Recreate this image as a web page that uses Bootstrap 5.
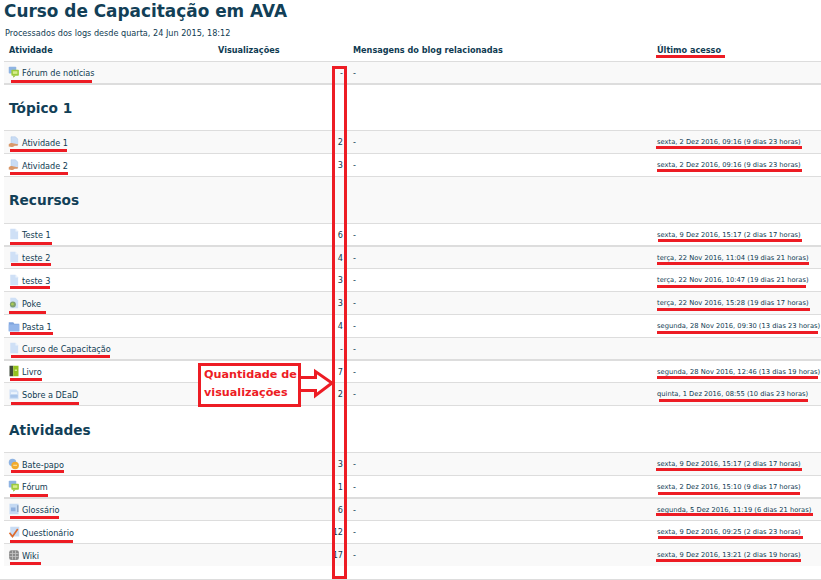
<!DOCTYPE html>
<html lang="pt-BR">
<head>
<meta charset="utf-8">
<title>Curso de Capacitação em AVA</title>
<link href="https://cdn.jsdelivr.net/npm/bootstrap@5.3.0/dist/css/bootstrap.min.css" rel="stylesheet">
<style>
html,body{margin:0;height:580px;overflow:hidden;background:#fff}
body{font-family:"DejaVu Sans",sans-serif;font-size:8.15px;color:#0f3b52;line-height:1}
.pagina{position:relative;width:821px;height:580px;padding:0 0 0 4px;border-bottom:0}
.titulo{font-family:"DejaVu Sans",sans-serif;font-weight:700;font-size:16.9px;line-height:20px;color:#123f57;margin:0;padding-top:1px;height:28px;white-space:nowrap}
.processados{height:17px;line-height:11px;margin:0 0 0 1px;font-size:8.15px}
.relatorio{table-layout:fixed;width:817px;border-collapse:separate;border-spacing:0;margin:0;color:#0f3b52}
.relatorio th,.relatorio td{padding:0 5px;border:0;border-bottom:1px solid #ddd;background:transparent;color:#0f3b52;font-size:8.15px;vertical-align:middle;white-space:nowrap;box-shadow:none}
.relatorio td{padding-top:1px}
.relatorio th{font-weight:700;height:17px;padding-bottom:5px}
.relatorio td.forte{border-bottom-width:2px;border-bottom-color:#ddd}
.relatorio td.fim{border-bottom:0}
.relatorio td.data{font-size:6.72px;padding-top:1px}
.relatorio td.desce{padding-top:3px}
.relatorio tr.cinza>td{background:#f9f9f9}
.relatorio tr.h22>td{height:22px}
.relatorio tr.h23>td{height:23px}
.relatorio tr.h46>td{height:46px}
.relatorio tr.h47>td{height:47px}
.relatorio .secao{font-weight:700;font-size:13.7px;color:#123f57}
.relatorio .num{text-align:right}
.ico{width:12px;height:12px;vertical-align:middle;margin:-2px 2px 0 -1px}
.rodape{position:absolute;left:0;right:0;top:579px;height:1px;background:#ddd}
.marcas{position:absolute;left:0;top:0;width:821px;height:580px;pointer-events:none}
.legenda{position:absolute;left:198px;top:363px;width:103px;height:44px;border:3px solid #ed1c24;background:#fff;color:#ed1c24;font-family:"DejaVu Sans",sans-serif;font-weight:700;font-size:11.2px;line-height:18px;padding:0 0 0 3px;white-space:nowrap}
</style>
</head>
<body>
<svg width="0" height="0" class="d-block position-absolute">
<defs>
<symbol id="i-forum" viewBox="0 0 16 16"><rect x="1" y="1" width="10" height="9" rx="1" fill="#8fb4e3"/><rect x="4.5" y="5" width="10" height="8" rx="1" fill="#9ccb3b"/><rect x="6.5" y="7" width="6" height="3.5" fill="#d7ec8c"/><path d="M7 13h3l-3 2.5z" fill="#8ab52d"/></symbol>
<symbol id="i-assign" viewBox="0 0 16 16"><path d="M4 1h6l3 3v8H4z" fill="#c9dcf4" stroke="#a8c4e6" stroke-width=".6"/><path d="M1 11c2-2 5-2 7-1l5 1c1 .5 0 2-1 2H9c-2 2-5 2-8 1z" fill="#d9986a"/></symbol>
<symbol id="i-page" viewBox="0 0 16 16"><path d="M3 1h7l3.500 3.500V15H3z" fill="#cfe0f6"/><path d="M10 1l3.500 3.500H10z" fill="#eef4fc"/></symbol>
<symbol id="i-poke" viewBox="0 0 16 16"><path d="M3 1h7l3.500 3.500V15H3z" fill="#cfe0f6"/><circle cx="6.500" cy="10" r="4" fill="#7f9e6e"/><circle cx="6" cy="9.500" r="1.700" fill="#a9cc55"/></symbol>
<symbol id="i-pasta" viewBox="0 0 16 16"><path d="M1 3h6l1.500 2H15v10H1z" fill="#7fa5de"/><rect x="1" y="6" width="14" height="9" fill="#94b6ea"/></symbol>
<symbol id="i-livro" viewBox="0 0 16 16"><rect x="2" y="1" width="5" height="14" fill="#3f4a3a"/><rect x="7" y="1" width="7" height="14" fill="#94c11f"/><rect x="9" y="6" width="3" height="2" fill="#d5e88b"/></symbol>
<symbol id="i-sobre" viewBox="0 0 16 16"><path d="M2 2h9l3 3v10H2z" fill="#cfe0f6"/><rect x="4" y="6" width="8" height="1.500" fill="#fff"/><rect x="3" y="9" width="10" height="4" fill="#a9c5ea"/></symbol>
<symbol id="i-chat" viewBox="0 0 16 16"><circle cx="6" cy="6" r="5" fill="#8fb4e3"/><circle cx="9.500" cy="10" r="5" fill="#f2ab2d"/><rect x="7" y="9" width="5" height="1.500" fill="#fbe3a4"/></symbol>
<symbol id="i-glossario" viewBox="0 0 16 16"><rect x="2" y="1" width="12" height="14" fill="#c4d9f3"/><rect x="4" y="6" width="6" height="5" fill="#8fb0de"/><rect x="12" y="3" width="2" height="9" fill="#93a9c7"/></symbol>
<symbol id="i-quiz" viewBox="0 0 16 16"><rect x="3" y="1" width="12" height="13" fill="#c9dcf4"/><path d="M2 9l4 5 7-10" fill="none" stroke="#de6b2c" stroke-width="2.200"/></symbol>
<symbol id="i-wiki" viewBox="0 0 16 16"><rect x="1.500" y="1.500" width="13" height="13" rx="3" fill="#8a8a8a"/><path d="M2 6h12M2 10h12M6 2v12M10 2v12" stroke="#c4c4c4" stroke-width="1.100"/></symbol>
</defs>
</svg>

<div class="pagina">
<h1 class="titulo">Curso de Capacitação em AVA</h1>
<p class="processados">Processados dos logs desde quarta, 24 Jun 2015, 18:12</p>
<table class="table relatorio">
<colgroup><col style="width:209px"><col style="width:135px"><col style="width:304px"><col style="width:169px"></colgroup>
<thead>
<tr><th>Atividade</th><th>Visualizações</th><th>Mensagens do blog relacionadas</th><th>Último acesso</th></tr>
</thead>
<tbody>
<tr class="h23 cinza"><td class="forte"><svg class="ico"><use href="#i-forum"/></svg>Fórum de notícias</td><td class="num forte">-</td><td class="forte">-</td><td class="forte"></td></tr>
<tr class="h46"><td colspan="4" class="desce"><span class="secao">Tópico 1</span></td></tr>
<tr class="h23 cinza"><td><svg class="ico"><use href="#i-assign"/></svg>Atividade 1</td><td class="num">2</td><td>-</td><td class="data">sexta, 2 Dez 2016, 09:16 (9 dias 23 horas)</td></tr>
<tr class="h23"><td><svg class="ico"><use href="#i-assign"/></svg>Atividade 2</td><td class="num">3</td><td>-</td><td class="data">sexta, 2 Dez 2016, 09:16 (9 dias 23 horas)</td></tr>
<tr class="h47 cinza"><td colspan="4"><span class="secao">Recursos</span></td></tr>
<tr class="h23"><td class="forte"><svg class="ico"><use href="#i-page"/></svg>Teste 1</td><td class="num forte">6</td><td class="forte">-</td><td class="forte data">sexta, 9 Dez 2016, 15:17 (2 dias 17 horas)</td></tr>
<tr class="h22 cinza"><td><svg class="ico"><use href="#i-page"/></svg>teste 2</td><td class="num">4</td><td>-</td><td class="data">terça, 22 Nov 2016, 11:04 (19 dias 21 horas)</td></tr>
<tr class="h23"><td><svg class="ico"><use href="#i-page"/></svg>teste 3</td><td class="num">3</td><td>-</td><td class="data">terça, 22 Nov 2016, 10:47 (19 dias 21 horas)</td></tr>
<tr class="h23 cinza"><td><svg class="ico"><use href="#i-poke"/></svg>Poke</td><td class="num">3</td><td>-</td><td class="data">terça, 22 Nov 2016, 15:28 (19 dias 17 horas)</td></tr>
<tr class="h23"><td><svg class="ico"><use href="#i-pasta"/></svg>Pasta 1</td><td class="num">4</td><td>-</td><td class="data">segunda, 28 Nov 2016, 09:30 (13 dias 23 horas)</td></tr>
<tr class="h23 cinza"><td class="forte"><svg class="ico"><use href="#i-page"/></svg>Curso de Capacitação</td><td class="num forte">-</td><td class="forte">-</td><td class="forte"></td></tr>
<tr class="h22"><td><svg class="ico"><use href="#i-livro"/></svg>Livro</td><td class="num">7</td><td>-</td><td class="data">segunda, 28 Nov 2016, 12:46 (13 dias 19 horas)</td></tr>
<tr class="h23 cinza"><td><svg class="ico"><use href="#i-sobre"/></svg>Sobre a DEaD</td><td class="num">2</td><td>-</td><td class="data">quinta, 1 Dez 2016, 08:55 (10 dias 23 horas)</td></tr>
<tr class="h47"><td colspan="4" class="desce"><span class="secao">Atividades</span></td></tr>
<tr class="h23 cinza"><td><svg class="ico"><use href="#i-chat"/></svg>Bate-papo</td><td class="num">3</td><td>-</td><td class="data">sexta, 9 Dez 2016, 15:17 (2 dias 17 horas)</td></tr>
<tr class="h23"><td class="forte"><svg class="ico"><use href="#i-forum"/></svg>Fórum</td><td class="num forte">1</td><td class="forte">-</td><td class="forte data">sexta, 2 Dez 2016, 15:10 (9 dias 17 horas)</td></tr>
<tr class="h22 cinza"><td><svg class="ico"><use href="#i-glossario"/></svg>Glossário</td><td class="num">6</td><td>-</td><td class="data">segunda, 5 Dez 2016, 11:19 (6 dias 21 horas)</td></tr>
<tr class="h23"><td><svg class="ico"><use href="#i-quiz"/></svg>Questionário</td><td class="num">12</td><td>-</td><td class="data">sexta, 9 Dez 2016, 09:25 (2 dias 23 horas)</td></tr>
<tr class="h22 cinza"><td class="fim"><svg class="ico"><use href="#i-wiki"/></svg>Wiki</td><td class="num fim">17</td><td class="fim">-</td><td class="fim data">sexta, 9 Dez 2016, 13:21 (2 dias 19 horas)</td></tr>
</tbody>
</table>
<div class="rodape"></div>

<svg class="marcas" viewBox="0 0 821 580" fill="#ed1c24">
<path fill-rule="evenodd" d="M332 66h15v513h-15zM335 69v507h9V69z"/>
<path d="M301 377.500H315.500V371.500L332 383L315.500 395.500V390.500H301" fill="#fff" stroke="#ed1c24" stroke-width="3"/>
<rect x="11" y="80" width="81" height="3"/><rect x="656" y="55" width="69" height="3"/>
<rect x="10" y="149" width="57" height="3"/><rect x="10" y="172" width="58" height="3"/>
<rect x="656" y="146" width="146" height="3"/><rect x="657" y="169" width="145" height="3"/>
<rect x="10" y="242" width="42" height="3"/><rect x="11" y="263" width="40" height="3"/>
<rect x="10" y="286" width="40" height="3"/><rect x="9" y="311" width="37" height="3"/>
<rect x="10" y="332" width="43" height="3"/><rect x="11" y="355" width="99" height="3"/>
<rect x="10" y="378" width="32" height="3"/><rect x="11" y="402" width="68" height="3"/>
<rect x="11" y="470" width="53" height="3"/><rect x="10" y="494" width="38" height="3"/>
<rect x="10" y="516" width="49" height="3"/><rect x="10" y="540" width="63" height="3"/>
<rect x="10" y="562" width="31" height="3"/>
<rect x="658" y="239" width="144" height="3"/><rect x="657" y="262" width="152" height="3"/>
<rect x="657" y="285" width="149" height="3"/><rect x="657" y="308" width="153" height="3"/>
<rect x="657" y="331" width="161" height="3"/><rect x="657" y="376" width="161" height="3"/>
<rect x="659" y="399" width="149" height="3"/><rect x="656" y="468" width="146" height="3"/>
<rect x="658" y="492" width="142" height="3"/><rect x="656" y="513" width="157" height="3"/>
<rect x="658" y="536" width="72" height="3"/><rect x="730" y="536" width="73" height="3"/>
<rect x="656" y="559" width="145" height="3"/>
</svg>
<div class="legenda">Quantidade de<br>visualizações</div>
</div>
<script src="https://cdn.jsdelivr.net/npm/bootstrap@5.3.0/dist/js/bootstrap.bundle.min.js"></script>
</body>
</html>
